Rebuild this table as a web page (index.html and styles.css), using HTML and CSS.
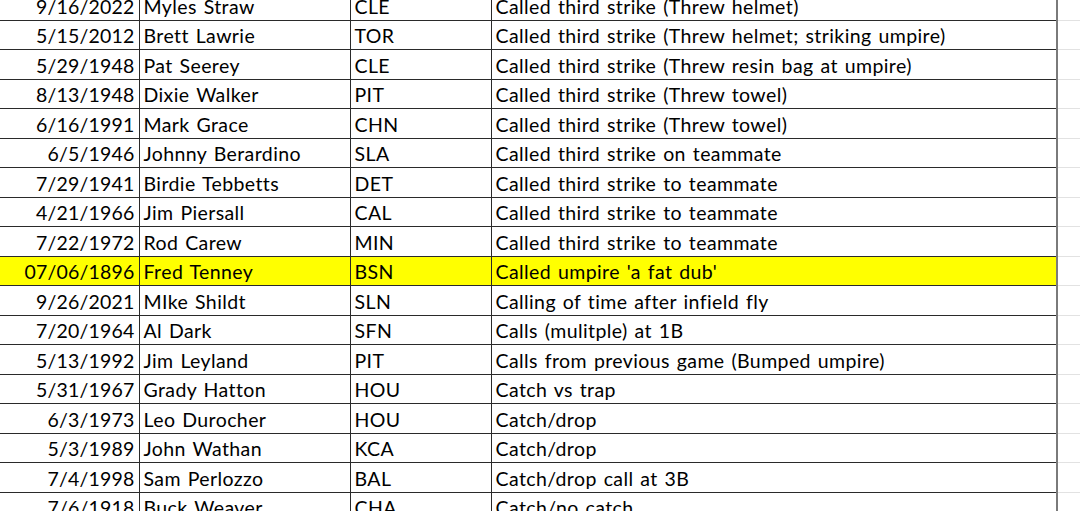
FILE: index.html
```html
<!DOCTYPE html>
<html>
<head>
<meta charset="utf-8">
<link rel="stylesheet" href="styles.css">
</head>
<body>
<div class="sheet">
<table class="grid">
<colgroup><col class="c-date"><col class="c-name"><col class="c-team"><col class="c-desc"><col class="c-pad"></colgroup>
<tbody>
<tr><td class="date">9/16/2022</td><td>Myles Straw</td><td>CLE</td><td class="desc">Called third strike (Threw helmet)</td><td class="pad"></td></tr>
<tr><td class="date">5/15/2012</td><td>Brett Lawrie</td><td>TOR</td><td class="desc">Called third strike (Threw helmet; striking umpire)</td><td class="pad"></td></tr>
<tr><td class="date">5/29/1948</td><td>Pat Seerey</td><td>CLE</td><td class="desc">Called third strike (Threw resin bag at umpire)</td><td class="pad"></td></tr>
<tr><td class="date">8/13/1948</td><td>Dixie Walker</td><td>PIT</td><td class="desc">Called third strike (Threw towel)</td><td class="pad"></td></tr>
<tr><td class="date">6/16/1991</td><td>Mark Grace</td><td>CHN</td><td class="desc">Called third strike (Threw towel)</td><td class="pad"></td></tr>
<tr><td class="date">6/5/1946</td><td>Johnny Berardino</td><td>SLA</td><td class="desc">Called third strike on teammate</td><td class="pad"></td></tr>
<tr><td class="date">7/29/1941</td><td>Birdie Tebbetts</td><td>DET</td><td class="desc">Called third strike to teammate</td><td class="pad"></td></tr>
<tr><td class="date">4/21/1966</td><td>Jim Piersall</td><td>CAL</td><td class="desc">Called third strike to teammate</td><td class="pad"></td></tr>
<tr><td class="date">7/22/1972</td><td>Rod Carew</td><td>MIN</td><td class="desc">Called third strike to teammate</td><td class="pad"></td></tr>
<tr class="hl"><td class="date">07/06/1896</td><td>Fred Tenney</td><td>BSN</td><td class="desc">Called umpire 'a fat dub'</td><td class="pad"></td></tr>
<tr><td class="date">9/26/2021</td><td>MIke Shildt</td><td>SLN</td><td class="desc">Calling of time after infield fly</td><td class="pad"></td></tr>
<tr><td class="date">7/20/1964</td><td>Al Dark</td><td>SFN</td><td class="desc">Calls (mulitple) at 1B</td><td class="pad"></td></tr>
<tr><td class="date">5/13/1992</td><td>Jim Leyland</td><td>PIT</td><td class="desc">Calls from previous game (Bumped umpire)</td><td class="pad"></td></tr>
<tr><td class="date">5/31/1967</td><td>Grady Hatton</td><td>HOU</td><td class="desc">Catch vs trap</td><td class="pad"></td></tr>
<tr><td class="date">6/3/1973</td><td>Leo Durocher</td><td>HOU</td><td class="desc">Catch/drop</td><td class="pad"></td></tr>
<tr><td class="date">5/3/1989</td><td>John Wathan</td><td>KCA</td><td class="desc">Catch/drop</td><td class="pad"></td></tr>
<tr><td class="date">7/4/1998</td><td>Sam Perlozzo</td><td>BAL</td><td class="desc">Catch/drop call at 3B</td><td class="pad"></td></tr>
<tr><td class="date">7/6/1918</td><td>Buck Weaver</td><td>CHA</td><td class="desc">Catch/no catch</td><td class="pad"></td></tr>
</tbody>
</table>
</div>
</body>
</html>
```
FILE: styles.css
```css
html, body {
  margin: 0;
  padding: 0;
  background: #fff;
}
.sheet {
  width: 1080px;
  height: 511px;
  overflow: hidden;
}
.grid {
  border-collapse: collapse;
  table-layout: fixed;
  width: 1100px;
  margin-top: -10px;
  font-family: Lato, "Open Sans", sans-serif;
  font-size: 19.5px;
  letter-spacing: 0.4px;
  word-spacing: 1.5px;
  color: #000;
}
.c-date { width: 139px; }
.c-name { width: 211px; }
.c-team { width: 141px; }
.c-desc { width: 566px; }
.c-pad { width: 43px; }
.grid td {
  height: 29.5px;
  box-sizing: border-box;
  padding: 0 4px 3px 4px;
  vertical-align: bottom;
  line-height: 20px;
  white-space: nowrap;
  overflow: hidden;
  border: 1px solid #2a2a2a;
}
.grid td:first-child {
  border-left: none;
}
.grid td.date {
  text-align: right;
  letter-spacing: 0.2px;
}
.grid td.desc {
  border-right: 2px solid #7a7a7a;
}
.grid td.pad {
  border: none;
  border-top: 1px solid #e2e2e2;
  border-bottom: 1px solid #e2e2e2;
}
.grid tr.hl td {
  background: #ffff00;
}
.grid tr.hl td.pad {
  background: #fff;
}
```
